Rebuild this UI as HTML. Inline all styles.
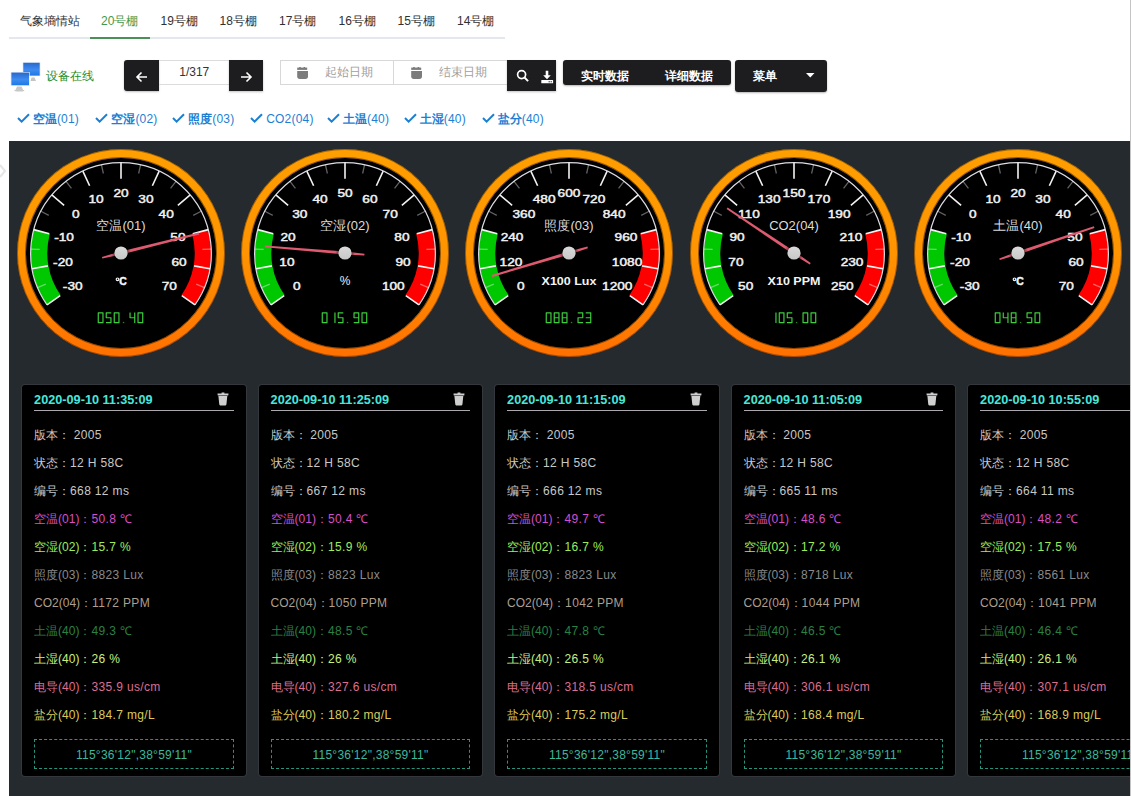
<!DOCTYPE html><html><head><meta charset="utf-8"><title>gauges</title><style>
*{margin:0;padding:0;box-sizing:border-box}
html,body{width:1131px;height:796px;overflow:hidden;background:#fff;font-family:"Liberation Sans",sans-serif}
.abs{position:absolute}
.tab{position:absolute;top:13px;font-size:12px;color:#303133;line-height:16px;white-space:nowrap}
.tab.on{color:#3f9a4f}
.tabline{position:absolute;left:9px;top:37px;width:496px;height:2px;background:#e4e7ed}
.tabact{position:absolute;left:90px;top:37px;width:60px;height:2px;background:#4a9158}
.btn{position:absolute;background:#1d1d1f;color:#fff}
.chk{position:absolute;top:111px;font-size:12px;color:#1c7fd4;line-height:16px;white-space:nowrap;letter-spacing:0.2px}
.chk b{font-weight:bold;letter-spacing:0}
.panel{position:absolute;left:9px;top:141px;width:1121px;height:700px;background:#252a2e;overflow:hidden}
.g{position:absolute;top:0px;top:0}
.lb{font:11.5px "Liberation Sans",sans-serif;fill:#f2f2f2;stroke:#f2f2f2;stroke-width:0.45px;text-anchor:middle}
.tt{font:13px "Liberation Sans",sans-serif;fill:#dcdcdc;text-anchor:middle}
.un{font:bold 11.5px "Liberation Sans",sans-serif;fill:#f4f4f4;text-anchor:middle}
.unr{font:12px "Liberation Sans",sans-serif;fill:#f0f0f0;text-anchor:middle}
.card{position:absolute;top:244px;width:223.8px;height:390.6px;background:#000;border-radius:3px;box-shadow:0 0 0 1px #34383c}
.dt{position:absolute;left:12px;top:6.8px;font:bold 12.7px/16px "Liberation Sans",sans-serif;color:#4ae6da;white-space:nowrap}
.trash{position:absolute;left:194.6px;top:6.6px}
.ul{position:absolute;left:12px;right:12px;top:24.8px;height:1.3px;background:#ada8ad}
.row{position:absolute;left:12px;font-size:12px;line-height:16px;white-space:nowrap}
.v{letter-spacing:0.35px}
.c0{color:#c8c8c8}.c1{color:#d64fca}.c2{color:#9eec5c}.c3{color:#8a8a8a}.c4{color:#ae9f8f}
.c5{color:#2b8044}.c6{color:#c8ef80}.c7{color:#dc6e92}.c8{color:#dccb5c}
.loc{position:absolute;left:12px;right:12px;top:354px;height:30px;border:1px dashed #27947f;color:#3db89c;font-size:12px;line-height:30px;letter-spacing:0.25px;text-align:center;white-space:nowrap}
</style></head><body><div class="tab" style="left:19.5px">气象墒情站</div><div class="tab on" style="left:101px">20号棚</div><div class="tab" style="left:160.5px">19号棚</div><div class="tab" style="left:219.5px">18号棚</div><div class="tab" style="left:279px">17号棚</div><div class="tab" style="left:338.5px">16号棚</div><div class="tab" style="left:397.5px">15号棚</div><div class="tab" style="left:457px">14号棚</div><div class="tabline"></div><div class="tabact"></div><svg class="abs" style="left:9px;top:60px" width="34" height="34" viewBox="0 0 34 34">
<defs><linearGradient id="mon" x1="0" y1="0" x2="0" y2="1"><stop offset="0" stop-color="#2a68cc"/><stop offset="0.55" stop-color="#3d8cf0"/><stop offset="1" stop-color="#1f78e6"/></linearGradient></defs>
<path d="M22.5 17.5l-1 3.5h5.5l-1.5-3.5z" fill="#c4c4c4"/>
<rect x="13.6" y="2.2" width="17.8" height="13.9" fill="#dbe8f6"/>
<rect x="14.3" y="2.8" width="16.4" height="12.8" fill="url(#mon)"/>
<path d="M8 26.5l-1.5 3.5h-1.2q-0.5 1.4 2 1.5h6q2.5-0.1 2-1.5h-1.2l-1.5-3.5z" fill="#c8c8c8"/>
<rect x="1.7" y="12" width="19" height="13.8" fill="#dbe8f6"/>
<rect x="2.4" y="12.6" width="17.6" height="12.6" fill="url(#mon)"/>
</svg><div class="abs" style="left:45.5px;top:67.5px;font-size:12px;line-height:16px;color:#1e8c1e">设备在线</div><div class="btn" style="left:124px;top:60px;width:35px;height:31px;border-radius:3px 0 0 3px;box-shadow:0 1px 2px rgba(0,0,0,.25)"></div><svg class="abs" style="left:134px;top:69px" width="16" height="16" viewBox="0 0 16 16"><path d="M13 8H3M7.5 3.5L3 8l4.5 4.5" stroke="#fff" stroke-width="1.6" fill="none"/></svg><div class="abs" style="left:159px;top:60px;width:70.5px;height:24.5px;border-top:1px solid #dcdcdc;border-bottom:1px solid #dcdcdc;font-size:12px;line-height:22px;color:#333;text-align:center">1/317</div><div class="btn" style="left:229.3px;top:60px;width:33.5px;height:31px;box-shadow:0 1px 2px rgba(0,0,0,.25)"></div><svg class="abs" style="left:238px;top:69px" width="16" height="16" viewBox="0 0 16 16"><path d="M3 8h10M8.5 3.5L13 8l-4.5 4.5" stroke="#fff" stroke-width="1.6" fill="none"/></svg><div class="abs" style="left:280px;top:60px;width:227.5px;height:24.5px;border:1px solid #d8d8d8;border-right:none"></div><div class="abs" style="left:392.5px;top:60px;width:1px;height:24.5px;background:#d8d8d8"></div><svg class="abs" style="left:296.8px;top:66.8px" width="12" height="13" viewBox="0 0 12 13"><rect x="0.2" y="0.6" width="10" height="2.3" fill="#7c7c7c"/><rect x="2.2" y="0" width="1.6" height="1.2" fill="#7c7c7c"/><rect x="6.6" y="0" width="1.6" height="1.2" fill="#7c7c7c"/><path d="M0.2 3.9h10.8v5.4q0 2.6-2.6 2.6h-5.6q-2.6 0-2.6-2.6z" fill="#7c7c7c"/></svg><svg class="abs" style="left:411px;top:66.8px" width="12" height="13" viewBox="0 0 12 13"><rect x="0.2" y="0.6" width="10" height="2.3" fill="#7c7c7c"/><rect x="2.2" y="0" width="1.6" height="1.2" fill="#7c7c7c"/><rect x="6.6" y="0" width="1.6" height="1.2" fill="#7c7c7c"/><path d="M0.2 3.9h10.8v5.4q0 2.6-2.6 2.6h-5.6q-2.6 0-2.6-2.6z" fill="#7c7c7c"/></svg><div class="abs" style="left:324.5px;top:63.8px;font-size:12px;line-height:16px;color:#a0a0a0">起始日期</div><div class="abs" style="left:438.5px;top:63.8px;font-size:12px;line-height:16px;color:#a0a0a0">结束日期</div><div class="btn" style="left:507px;top:60px;width:49px;height:31px;box-shadow:0 1px 2px rgba(0,0,0,.25)"></div><svg class="abs" style="left:516px;top:69px" width="14" height="14" viewBox="0 0 14 14"><circle cx="5.6" cy="5.6" r="4" stroke="#fff" stroke-width="1.7" fill="none"/><path d="M8.5 8.5l3.6 3.6" stroke="#fff" stroke-width="1.9"/></svg><svg class="abs" style="left:540px;top:69.5px" width="14" height="14" viewBox="0 0 14 14"><path d="M5.7 0.8h2.6v4.4h2.5L7 9.2 3.2 5.2h2.5z" fill="#fff"/><rect x="1.3" y="9.9" width="11.8" height="3.4" rx="0.4" fill="#fff"/><rect x="8.6" y="11.2" width="1.2" height="1.1" fill="#1d1d1f"/><rect x="10.6" y="11.2" width="1.2" height="1.1" fill="#1d1d1f"/></svg><div class="btn" style="left:563.2px;top:60px;width:168.2px;height:24.5px;border-radius:3px;box-shadow:0 1px 2px rgba(0,0,0,.3)"></div><div class="abs" style="left:581px;top:67.5px;font:bold 12px/16px 'Liberation Sans',sans-serif;color:#fff">实时数据</div><div class="abs" style="left:665px;top:67.5px;font:bold 12px/16px 'Liberation Sans',sans-serif;color:#fff">详细数据</div><div class="btn" style="left:735.4px;top:60px;width:91.2px;height:32.4px;border-radius:3px;box-shadow:0 1px 2px rgba(0,0,0,.3)"></div><div class="abs" style="left:753px;top:67.5px;font:bold 12px/16px 'Liberation Sans',sans-serif;color:#fff">菜单</div><svg class="abs" style="left:806px;top:73px" width="9" height="5" viewBox="0 0 9 5"><path d="M0 0h8.5L4.25 4.5z" fill="#fff"/></svg><svg class="abs" style="left:16.9px;top:113px" width="13" height="10" viewBox="0 0 13 10"><path d="M1 5l3.6 3.6L12 1.2" stroke="#1c7fd4" stroke-width="2" fill="none"/></svg><div class="chk" style="left:32.9px"><b>空温</b>(01)</div><svg class="abs" style="left:95.4px;top:113px" width="13" height="10" viewBox="0 0 13 10"><path d="M1 5l3.6 3.6L12 1.2" stroke="#1c7fd4" stroke-width="2" fill="none"/></svg><div class="chk" style="left:111.4px"><b>空湿</b>(02)</div><svg class="abs" style="left:172.2px;top:113px" width="13" height="10" viewBox="0 0 13 10"><path d="M1 5l3.6 3.6L12 1.2" stroke="#1c7fd4" stroke-width="2" fill="none"/></svg><div class="chk" style="left:188.2px"><b>照度</b>(03)</div><svg class="abs" style="left:250.2px;top:113px" width="13" height="10" viewBox="0 0 13 10"><path d="M1 5l3.6 3.6L12 1.2" stroke="#1c7fd4" stroke-width="2" fill="none"/></svg><div class="chk" style="left:266.2px"><b></b>CO2(04)</div><svg class="abs" style="left:327px;top:113px" width="13" height="10" viewBox="0 0 13 10"><path d="M1 5l3.6 3.6L12 1.2" stroke="#1c7fd4" stroke-width="2" fill="none"/></svg><div class="chk" style="left:343px"><b>土温</b>(40)</div><svg class="abs" style="left:403.8px;top:113px" width="13" height="10" viewBox="0 0 13 10"><path d="M1 5l3.6 3.6L12 1.2" stroke="#1c7fd4" stroke-width="2" fill="none"/></svg><div class="chk" style="left:419.8px"><b>土湿</b>(40)</div><svg class="abs" style="left:481.8px;top:113px" width="13" height="10" viewBox="0 0 13 10"><path d="M1 5l3.6 3.6L12 1.2" stroke="#1c7fd4" stroke-width="2" fill="none"/></svg><div class="chk" style="left:497.8px"><b>盐分</b>(40)</div><div class="abs" style="left:1130px;top:0;width:1px;height:796px;background:#c4c4c4"></div><svg class="abs" style="left:0;top:163px" width="8" height="16" viewBox="0 0 8 16"><path d="M0 2l5 6-5 6" stroke="#e6e6e6" stroke-width="2.2" fill="none"/></svg><div class="panel"><svg width="0" height="0" style="position:absolute"><defs>
<linearGradient id="og" x1="0" y1="0" x2="0" y2="1"><stop offset="0" stop-color="#ff9f00"/><stop offset="0.5" stop-color="#ff9400"/><stop offset="1" stop-color="#ff7000"/></linearGradient>
<linearGradient id="kg" x1="0" y1="0" x2="0" y2="1"><stop offset="0" stop-color="#dadada"/><stop offset="1" stop-color="#c8c8c8"/></linearGradient>
<radialGradient id="ks"><stop offset="0.6" stop-color="#000" stop-opacity="0.5"/><stop offset="1" stop-color="#000" stop-opacity="0"/></radialGradient>
</defs></svg><svg class="g" style="left:0px" width="224" height="224" viewBox="0 0 224.2 224"><g transform="translate(112.1 112)"><circle r="104" fill="url(#og)"/><circle r="103.6" fill="none" stroke="rgba(40,20,0,0.45)" stroke-width="0.9"/><circle r="95.6" fill="none" stroke="rgba(40,20,0,0.55)" stroke-width="0.9"/><circle r="95.1" fill="#000"/><path d="M-74.05 51.85A90.4 90.4 0 0 1 -87.32 -23.4L-71.29 -19.1A73.8 73.8 0 0 0 -60.45 42.33Z" fill="#00c800"/><path d="M87.32 -23.4A90.4 90.4 0 0 1 74.05 51.85L60.45 42.33A73.8 73.8 0 0 0 71.29 -19.1Z" fill="#ff0000"/><path d="M-74.05 51.85A90.4 90.4 0 1 1 74.05 51.85" stroke="#dcdce4" stroke-width="1.2" fill="none"/><path d="M-74.05 51.85L-60.86 42.62M-89.03 15.7L-73.17 12.9M-87.32 -23.4L-71.77 -19.23M-69.25 -58.11L-56.92 -47.76M-38.2 -81.93L-31.4 -67.34M0 -90.4L0 -74.3M38.2 -81.93L31.4 -67.34M69.25 -58.11L56.92 -47.76M87.32 -23.4L71.77 -19.23M89.03 15.7L73.17 12.9M74.05 51.85L60.86 42.62" stroke="#f2f2f2" stroke-width="1.6"/><path d="M-83.52 34.59L-75.3 31.19M-90.31 -3.94L-81.42 -3.55M-80.19 -41.74L-72.29 -37.63M-55.03 -71.72L-49.61 -64.66M-19.57 -88.26L-17.64 -79.57M19.57 -88.26L17.64 -79.57M55.03 -71.72L49.61 -64.66M80.19 -41.74L72.29 -37.63M90.31 -3.94L81.42 -3.55M83.52 34.59L75.3 31.19" stroke="rgba(255,255,255,0.38)" stroke-width="1.3"/><text transform="translate(-48.33 36.94) scale(1.19 1)" class="lb">-30</text><text transform="translate(-58.1 13.35) scale(1.19 1)" class="lb">-20</text><text transform="translate(-56.99 -12.17) scale(1.19 1)" class="lb">-10</text><text transform="translate(-45.2 -34.82) scale(1.19 1)" class="lb">0</text><text transform="translate(-24.93 -50.37) scale(1.19 1)" class="lb">10</text><text transform="translate(0 -55.9) scale(1.19 1)" class="lb">20</text><text transform="translate(24.93 -50.37) scale(1.19 1)" class="lb">30</text><text transform="translate(45.2 -34.82) scale(1.19 1)" class="lb">40</text><text transform="translate(56.99 -12.17) scale(1.19 1)" class="lb">50</text><text transform="translate(58.1 13.35) scale(1.19 1)" class="lb">60</text><text transform="translate(48.33 36.94) scale(1.19 1)" class="lb">70</text><text x="0" y="-23.5" class="tt">空温(01)</text><circle cx="-3.5" cy="26.3" r="1.3" stroke="#f4f4f4" stroke-width="1.2" fill="none"/><text x="1.9" y="32.4" class="un" style="font-size:10.4px;stroke:#f4f4f4;stroke-width:0.5px">C</text><path d="M-22.45 59.85L-18.35 59.85M-18.05 60.15L-18.05 64.5M-18.05 65.1L-18.05 69.45M-22.45 69.75L-18.35 69.75M-22.75 65.1L-22.75 69.45M-22.75 60.15L-22.75 64.5" stroke="#3ccc3c" stroke-width="1.2" stroke-linecap="square" fill="none"/><path d="M-14.45 59.85L-10.35 59.85M-10.05 65.1L-10.05 69.45M-14.45 69.75L-10.35 69.75M-14.75 60.15L-14.75 64.5M-14.45 64.8L-10.35 64.8" stroke="#3ccc3c" stroke-width="1.2" stroke-linecap="square" fill="none"/><path d="M-6.45 59.85L-2.35 59.85M-2.05 60.15L-2.05 64.5M-2.05 65.1L-2.05 69.45M-6.45 69.75L-2.35 69.75M-6.75 65.1L-6.75 69.45M-6.75 60.15L-6.75 64.5" stroke="#3ccc3c" stroke-width="1.2" stroke-linecap="square" fill="none"/><rect x="1.85" y="68.95" width="1.4" height="1.3" fill="#3ccc3c" opacity="0.65"/><path d="M13.75 60.15L13.75 64.5M13.75 65.1L13.75 69.45M9.05 60.15L9.05 64.5M9.35 64.8L13.45 64.8" stroke="#3ccc3c" stroke-width="1.2" stroke-linecap="square" fill="none"/><path d="M17.35 59.85L21.45 59.85M21.75 60.15L21.75 64.5M21.75 65.1L21.75 69.45M17.35 69.75L21.45 69.75M17.05 65.1L17.05 69.45M17.05 60.15L17.05 64.5" stroke="#3ccc3c" stroke-width="1.2" stroke-linecap="square" fill="none"/><path d="M-18.72 5.54L0.37 1.5L78.34 -18.55L77.88 -20.4L-0.37 -1.5L-19.13 3.89Z" fill="#de5a70"/><circle r="10" fill="url(#ks)"/><circle r="6.6" fill="url(#kg)"/></g></svg><svg class="g" style="left:224.2px" width="224" height="224" viewBox="0 0 224.2 224"><g transform="translate(112.1 112)"><circle r="104" fill="url(#og)"/><circle r="103.6" fill="none" stroke="rgba(40,20,0,0.45)" stroke-width="0.9"/><circle r="95.6" fill="none" stroke="rgba(40,20,0,0.55)" stroke-width="0.9"/><circle r="95.1" fill="#000"/><path d="M-74.05 51.85A90.4 90.4 0 0 1 -87.32 -23.4L-71.29 -19.1A73.8 73.8 0 0 0 -60.45 42.33Z" fill="#00c800"/><path d="M87.32 -23.4A90.4 90.4 0 0 1 74.05 51.85L60.45 42.33A73.8 73.8 0 0 0 71.29 -19.1Z" fill="#ff0000"/><path d="M-74.05 51.85A90.4 90.4 0 1 1 74.05 51.85" stroke="#dcdce4" stroke-width="1.2" fill="none"/><path d="M-74.05 51.85L-60.86 42.62M-89.03 15.7L-73.17 12.9M-87.32 -23.4L-71.77 -19.23M-69.25 -58.11L-56.92 -47.76M-38.2 -81.93L-31.4 -67.34M0 -90.4L0 -74.3M38.2 -81.93L31.4 -67.34M69.25 -58.11L56.92 -47.76M87.32 -23.4L71.77 -19.23M89.03 15.7L73.17 12.9M74.05 51.85L60.86 42.62" stroke="#f2f2f2" stroke-width="1.6"/><path d="M-83.52 34.59L-75.3 31.19M-90.31 -3.94L-81.42 -3.55M-80.19 -41.74L-72.29 -37.63M-55.03 -71.72L-49.61 -64.66M-19.57 -88.26L-17.64 -79.57M19.57 -88.26L17.64 -79.57M55.03 -71.72L49.61 -64.66M80.19 -41.74L72.29 -37.63M90.31 -3.94L81.42 -3.55M83.52 34.59L75.3 31.19" stroke="rgba(255,255,255,0.38)" stroke-width="1.3"/><text transform="translate(-48.33 36.94) scale(1.19 1)" class="lb">0</text><text transform="translate(-58.1 13.35) scale(1.19 1)" class="lb">10</text><text transform="translate(-56.99 -12.17) scale(1.19 1)" class="lb">20</text><text transform="translate(-45.2 -34.82) scale(1.19 1)" class="lb">30</text><text transform="translate(-24.93 -50.37) scale(1.19 1)" class="lb">40</text><text transform="translate(0 -55.9) scale(1.19 1)" class="lb">50</text><text transform="translate(24.93 -50.37) scale(1.19 1)" class="lb">60</text><text transform="translate(45.2 -34.82) scale(1.19 1)" class="lb">70</text><text transform="translate(56.99 -12.17) scale(1.19 1)" class="lb">80</text><text transform="translate(58.1 13.35) scale(1.19 1)" class="lb">90</text><text transform="translate(48.33 36.94) scale(1.19 1)" class="lb">100</text><text x="0" y="-23.5" class="tt">空湿(02)</text><text x="0" y="32.4" class="unr">%</text><path d="M-22.45 59.85L-18.35 59.85M-18.05 60.15L-18.05 64.5M-18.05 65.1L-18.05 69.45M-22.45 69.75L-18.35 69.75M-22.75 65.1L-22.75 69.45M-22.75 60.15L-22.75 64.5" stroke="#3ccc3c" stroke-width="1.2" stroke-linecap="square" fill="none"/><path d="M-10.05 60.15L-10.05 64.5M-10.05 65.1L-10.05 69.45" stroke="#3ccc3c" stroke-width="1.2" stroke-linecap="square" fill="none"/><path d="M-6.45 59.85L-2.35 59.85M-2.05 65.1L-2.05 69.45M-6.45 69.75L-2.35 69.75M-6.75 60.15L-6.75 64.5M-6.45 64.8L-2.35 64.8" stroke="#3ccc3c" stroke-width="1.2" stroke-linecap="square" fill="none"/><rect x="1.85" y="68.95" width="1.4" height="1.3" fill="#3ccc3c" opacity="0.65"/><path d="M9.35 59.85L13.45 59.85M13.75 60.15L13.75 64.5M13.75 65.1L13.75 69.45M9.35 69.75L13.45 69.75M9.05 60.15L9.05 64.5M9.35 64.8L13.45 64.8" stroke="#3ccc3c" stroke-width="1.2" stroke-linecap="square" fill="none"/><path d="M17.35 59.85L21.45 59.85M21.75 60.15L21.75 64.5M21.75 65.1L21.75 69.45M17.35 69.75L21.45 69.75M17.05 65.1L17.05 69.45M17.05 60.15L17.05 64.5" stroke="#3ccc3c" stroke-width="1.2" stroke-linecap="square" fill="none"/><path d="M19.5 0.77L0.13 -1.54L-80.14 -7.61L-80.3 -5.72L-0.13 1.54L19.36 2.46Z" fill="#de5a70"/><circle r="10" fill="url(#ks)"/><circle r="6.6" fill="url(#kg)"/></g></svg><svg class="g" style="left:448.4px" width="224" height="224" viewBox="0 0 224.2 224"><g transform="translate(112.1 112)"><circle r="104" fill="url(#og)"/><circle r="103.6" fill="none" stroke="rgba(40,20,0,0.45)" stroke-width="0.9"/><circle r="95.6" fill="none" stroke="rgba(40,20,0,0.55)" stroke-width="0.9"/><circle r="95.1" fill="#000"/><path d="M-74.05 51.85A90.4 90.4 0 0 1 -87.32 -23.4L-71.29 -19.1A73.8 73.8 0 0 0 -60.45 42.33Z" fill="#00c800"/><path d="M87.32 -23.4A90.4 90.4 0 0 1 74.05 51.85L60.45 42.33A73.8 73.8 0 0 0 71.29 -19.1Z" fill="#ff0000"/><path d="M-74.05 51.85A90.4 90.4 0 1 1 74.05 51.85" stroke="#dcdce4" stroke-width="1.2" fill="none"/><path d="M-74.05 51.85L-60.86 42.62M-89.03 15.7L-73.17 12.9M-87.32 -23.4L-71.77 -19.23M-69.25 -58.11L-56.92 -47.76M-38.2 -81.93L-31.4 -67.34M0 -90.4L0 -74.3M38.2 -81.93L31.4 -67.34M69.25 -58.11L56.92 -47.76M87.32 -23.4L71.77 -19.23M89.03 15.7L73.17 12.9M74.05 51.85L60.86 42.62" stroke="#f2f2f2" stroke-width="1.6"/><path d="M-83.52 34.59L-75.3 31.19M-90.31 -3.94L-81.42 -3.55M-80.19 -41.74L-72.29 -37.63M-55.03 -71.72L-49.61 -64.66M-19.57 -88.26L-17.64 -79.57M19.57 -88.26L17.64 -79.57M55.03 -71.72L49.61 -64.66M80.19 -41.74L72.29 -37.63M90.31 -3.94L81.42 -3.55M83.52 34.59L75.3 31.19" stroke="rgba(255,255,255,0.38)" stroke-width="1.3"/><text transform="translate(-48.33 36.94) scale(1.19 1)" class="lb">0</text><text transform="translate(-58.1 13.35) scale(1.19 1)" class="lb">120</text><text transform="translate(-56.99 -12.17) scale(1.19 1)" class="lb">240</text><text transform="translate(-45.2 -34.82) scale(1.19 1)" class="lb">360</text><text transform="translate(-24.93 -50.37) scale(1.19 1)" class="lb">480</text><text transform="translate(0 -55.9) scale(1.19 1)" class="lb">600</text><text transform="translate(24.93 -50.37) scale(1.19 1)" class="lb">720</text><text transform="translate(45.2 -34.82) scale(1.19 1)" class="lb">840</text><text transform="translate(56.99 -12.17) scale(1.19 1)" class="lb">960</text><text transform="translate(58.1 13.35) scale(1.19 1)" class="lb">1080</text><text transform="translate(48.33 36.94) scale(1.19 1)" class="lb">1200</text><text x="0" y="-23.5" class="tt">照度(03)</text><text transform="translate(0 32.4) scale(1.09 1)" class="un">X100 Lux</text><path d="M-22.45 59.85L-18.35 59.85M-18.05 60.15L-18.05 64.5M-18.05 65.1L-18.05 69.45M-22.45 69.75L-18.35 69.75M-22.75 65.1L-22.75 69.45M-22.75 60.15L-22.75 64.5" stroke="#3ccc3c" stroke-width="1.2" stroke-linecap="square" fill="none"/><path d="M-14.45 59.85L-10.35 59.85M-10.05 60.15L-10.05 64.5M-10.05 65.1L-10.05 69.45M-14.45 69.75L-10.35 69.75M-14.75 65.1L-14.75 69.45M-14.75 60.15L-14.75 64.5M-14.45 64.8L-10.35 64.8" stroke="#3ccc3c" stroke-width="1.2" stroke-linecap="square" fill="none"/><path d="M-6.45 59.85L-2.35 59.85M-2.05 60.15L-2.05 64.5M-2.05 65.1L-2.05 69.45M-6.45 69.75L-2.35 69.75M-6.75 65.1L-6.75 69.45M-6.75 60.15L-6.75 64.5M-6.45 64.8L-2.35 64.8" stroke="#3ccc3c" stroke-width="1.2" stroke-linecap="square" fill="none"/><rect x="1.85" y="68.95" width="1.4" height="1.3" fill="#3ccc3c" opacity="0.65"/><path d="M9.35 59.85L13.45 59.85M13.75 60.15L13.75 64.5M9.35 69.75L13.45 69.75M9.05 65.1L9.05 69.45M9.35 64.8L13.45 64.8" stroke="#3ccc3c" stroke-width="1.2" stroke-linecap="square" fill="none"/><path d="M17.35 59.85L21.45 59.85M21.75 60.15L21.75 64.5M21.75 65.1L21.75 69.45M17.35 69.75L21.45 69.75M17.35 64.8L21.45 64.8" stroke="#3ccc3c" stroke-width="1.2" stroke-linecap="square" fill="none"/><path d="M18.44 -6.39L-0.44 -1.49L-77.41 22.11L-76.87 23.93L0.44 1.49L18.93 -4.76Z" fill="#de5a70"/><circle r="10" fill="url(#ks)"/><circle r="6.6" fill="url(#kg)"/></g></svg><svg class="g" style="left:672.6px" width="224" height="224" viewBox="0 0 224.2 224"><g transform="translate(112.1 112)"><circle r="104" fill="url(#og)"/><circle r="103.6" fill="none" stroke="rgba(40,20,0,0.45)" stroke-width="0.9"/><circle r="95.6" fill="none" stroke="rgba(40,20,0,0.55)" stroke-width="0.9"/><circle r="95.1" fill="#000"/><path d="M-74.05 51.85A90.4 90.4 0 0 1 -87.32 -23.4L-71.29 -19.1A73.8 73.8 0 0 0 -60.45 42.33Z" fill="#00c800"/><path d="M87.32 -23.4A90.4 90.4 0 0 1 74.05 51.85L60.45 42.33A73.8 73.8 0 0 0 71.29 -19.1Z" fill="#ff0000"/><path d="M-74.05 51.85A90.4 90.4 0 1 1 74.05 51.85" stroke="#dcdce4" stroke-width="1.2" fill="none"/><path d="M-74.05 51.85L-60.86 42.62M-89.03 15.7L-73.17 12.9M-87.32 -23.4L-71.77 -19.23M-69.25 -58.11L-56.92 -47.76M-38.2 -81.93L-31.4 -67.34M0 -90.4L0 -74.3M38.2 -81.93L31.4 -67.34M69.25 -58.11L56.92 -47.76M87.32 -23.4L71.77 -19.23M89.03 15.7L73.17 12.9M74.05 51.85L60.86 42.62" stroke="#f2f2f2" stroke-width="1.6"/><path d="M-83.52 34.59L-75.3 31.19M-90.31 -3.94L-81.42 -3.55M-80.19 -41.74L-72.29 -37.63M-55.03 -71.72L-49.61 -64.66M-19.57 -88.26L-17.64 -79.57M19.57 -88.26L17.64 -79.57M55.03 -71.72L49.61 -64.66M80.19 -41.74L72.29 -37.63M90.31 -3.94L81.42 -3.55M83.52 34.59L75.3 31.19" stroke="rgba(255,255,255,0.38)" stroke-width="1.3"/><text transform="translate(-48.33 36.94) scale(1.19 1)" class="lb">50</text><text transform="translate(-58.1 13.35) scale(1.19 1)" class="lb">70</text><text transform="translate(-56.99 -12.17) scale(1.19 1)" class="lb">90</text><text transform="translate(-45.2 -34.82) scale(1.19 1)" class="lb">110</text><text transform="translate(-24.93 -50.37) scale(1.19 1)" class="lb">130</text><text transform="translate(0 -55.9) scale(1.19 1)" class="lb">150</text><text transform="translate(24.93 -50.37) scale(1.19 1)" class="lb">170</text><text transform="translate(45.2 -34.82) scale(1.19 1)" class="lb">190</text><text transform="translate(56.99 -12.17) scale(1.19 1)" class="lb">210</text><text transform="translate(58.1 13.35) scale(1.19 1)" class="lb">230</text><text transform="translate(48.33 36.94) scale(1.19 1)" class="lb">250</text><text x="0" y="-23.5" class="tt">CO2(04)</text><text transform="translate(0 32.4) scale(1.09 1)" class="un">X10 PPM</text><path d="M-18.05 60.15L-18.05 64.5M-18.05 65.1L-18.05 69.45" stroke="#3ccc3c" stroke-width="1.2" stroke-linecap="square" fill="none"/><path d="M-14.45 59.85L-10.35 59.85M-10.05 60.15L-10.05 64.5M-10.05 65.1L-10.05 69.45M-14.45 69.75L-10.35 69.75M-14.75 65.1L-14.75 69.45M-14.75 60.15L-14.75 64.5" stroke="#3ccc3c" stroke-width="1.2" stroke-linecap="square" fill="none"/><path d="M-6.45 59.85L-2.35 59.85M-2.05 65.1L-2.05 69.45M-6.45 69.75L-2.35 69.75M-6.75 60.15L-6.75 64.5M-6.45 64.8L-2.35 64.8" stroke="#3ccc3c" stroke-width="1.2" stroke-linecap="square" fill="none"/><rect x="1.85" y="68.95" width="1.4" height="1.3" fill="#3ccc3c" opacity="0.65"/><path d="M9.35 59.85L13.45 59.85M13.75 60.15L13.75 64.5M13.75 65.1L13.75 69.45M9.35 69.75L13.45 69.75M9.05 65.1L9.05 69.45M9.05 60.15L9.05 64.5" stroke="#3ccc3c" stroke-width="1.2" stroke-linecap="square" fill="none"/><path d="M17.35 59.85L21.45 59.85M21.75 60.15L21.75 64.5M21.75 65.1L21.75 69.45M17.35 69.75L21.45 69.75M17.05 65.1L17.05 69.45M17.05 60.15L17.05 64.5" stroke="#3ccc3c" stroke-width="1.2" stroke-linecap="square" fill="none"/><path d="M16.69 10.13L0.86 -1.29L-66.41 -45.51L-67.46 -43.93L-0.86 1.29L15.74 11.54Z" fill="#de5a70"/><circle r="10" fill="url(#ks)"/><circle r="6.6" fill="url(#kg)"/></g></svg><svg class="g" style="left:896.8px" width="224" height="224" viewBox="0 0 224.2 224"><g transform="translate(112.1 112)"><circle r="104" fill="url(#og)"/><circle r="103.6" fill="none" stroke="rgba(40,20,0,0.45)" stroke-width="0.9"/><circle r="95.6" fill="none" stroke="rgba(40,20,0,0.55)" stroke-width="0.9"/><circle r="95.1" fill="#000"/><path d="M-74.05 51.85A90.4 90.4 0 0 1 -87.32 -23.4L-71.29 -19.1A73.8 73.8 0 0 0 -60.45 42.33Z" fill="#00c800"/><path d="M87.32 -23.4A90.4 90.4 0 0 1 74.05 51.85L60.45 42.33A73.8 73.8 0 0 0 71.29 -19.1Z" fill="#ff0000"/><path d="M-74.05 51.85A90.4 90.4 0 1 1 74.05 51.85" stroke="#dcdce4" stroke-width="1.2" fill="none"/><path d="M-74.05 51.85L-60.86 42.62M-89.03 15.7L-73.17 12.9M-87.32 -23.4L-71.77 -19.23M-69.25 -58.11L-56.92 -47.76M-38.2 -81.93L-31.4 -67.34M0 -90.4L0 -74.3M38.2 -81.93L31.4 -67.34M69.25 -58.11L56.92 -47.76M87.32 -23.4L71.77 -19.23M89.03 15.7L73.17 12.9M74.05 51.85L60.86 42.62" stroke="#f2f2f2" stroke-width="1.6"/><path d="M-83.52 34.59L-75.3 31.19M-90.31 -3.94L-81.42 -3.55M-80.19 -41.74L-72.29 -37.63M-55.03 -71.72L-49.61 -64.66M-19.57 -88.26L-17.64 -79.57M19.57 -88.26L17.64 -79.57M55.03 -71.72L49.61 -64.66M80.19 -41.74L72.29 -37.63M90.31 -3.94L81.42 -3.55M83.52 34.59L75.3 31.19" stroke="rgba(255,255,255,0.38)" stroke-width="1.3"/><text transform="translate(-48.33 36.94) scale(1.19 1)" class="lb">-30</text><text transform="translate(-58.1 13.35) scale(1.19 1)" class="lb">-20</text><text transform="translate(-56.99 -12.17) scale(1.19 1)" class="lb">-10</text><text transform="translate(-45.2 -34.82) scale(1.19 1)" class="lb">0</text><text transform="translate(-24.93 -50.37) scale(1.19 1)" class="lb">10</text><text transform="translate(0 -55.9) scale(1.19 1)" class="lb">20</text><text transform="translate(24.93 -50.37) scale(1.19 1)" class="lb">30</text><text transform="translate(45.2 -34.82) scale(1.19 1)" class="lb">40</text><text transform="translate(56.99 -12.17) scale(1.19 1)" class="lb">50</text><text transform="translate(58.1 13.35) scale(1.19 1)" class="lb">60</text><text transform="translate(48.33 36.94) scale(1.19 1)" class="lb">70</text><text x="0" y="-23.5" class="tt">土温(40)</text><circle cx="-3.5" cy="26.3" r="1.3" stroke="#f4f4f4" stroke-width="1.2" fill="none"/><text x="1.9" y="32.4" class="un" style="font-size:10.4px;stroke:#f4f4f4;stroke-width:0.5px">C</text><path d="M-22.45 59.85L-18.35 59.85M-18.05 60.15L-18.05 64.5M-18.05 65.1L-18.05 69.45M-22.45 69.75L-18.35 69.75M-22.75 65.1L-22.75 69.45M-22.75 60.15L-22.75 64.5" stroke="#3ccc3c" stroke-width="1.2" stroke-linecap="square" fill="none"/><path d="M-10.05 60.15L-10.05 64.5M-10.05 65.1L-10.05 69.45M-14.75 60.15L-14.75 64.5M-14.45 64.8L-10.35 64.8" stroke="#3ccc3c" stroke-width="1.2" stroke-linecap="square" fill="none"/><path d="M-6.45 59.85L-2.35 59.85M-2.05 60.15L-2.05 64.5M-2.05 65.1L-2.05 69.45M-6.45 69.75L-2.35 69.75M-6.75 65.1L-6.75 69.45M-6.75 60.15L-6.75 64.5M-6.45 64.8L-2.35 64.8" stroke="#3ccc3c" stroke-width="1.2" stroke-linecap="square" fill="none"/><rect x="1.85" y="68.95" width="1.4" height="1.3" fill="#3ccc3c" opacity="0.65"/><path d="M9.35 59.85L13.45 59.85M13.75 65.1L13.75 69.45M9.35 69.75L13.45 69.75M9.05 60.15L9.05 64.5M9.35 64.8L13.45 64.8" stroke="#3ccc3c" stroke-width="1.2" stroke-linecap="square" fill="none"/><path d="M17.35 59.85L21.45 59.85M21.75 60.15L21.75 64.5M21.75 65.1L21.75 69.45M17.35 69.75L21.45 69.75M17.05 65.1L17.05 69.45M17.05 60.15L17.05 64.5" stroke="#3ccc3c" stroke-width="1.2" stroke-linecap="square" fill="none"/><path d="M-18.19 7.07L0.5 1.47L76.53 -24.98L75.92 -26.78L-0.5 -1.47L-18.74 5.46Z" fill="#de5a70"/><circle r="10" fill="url(#ks)"/><circle r="6.6" fill="url(#kg)"/></g></svg><div class="card" style="left:13.1px"><div class="dt">2020-09-10 11:35:09</div><svg class="trash" width="12" height="14" viewBox="0 0 12 14"><path d="M4.6 0.5h2.8v1h3.9q0.4 0 0.2 0.6l-0.3 1.3h-10.4l-0.3-1.3q-0.2-0.6 0.2-0.6h3.9z" fill="#cfcfcf"/><path d="M1.4 3.9h8.9l-0.9 8.7q-0.1 0.8-0.9 0.8h-5.3q-0.8 0-0.9-0.8z" fill="#cfcfcf"/></svg><div class="ul"></div><div class="row c0" style="top:41.6px">版本：<span class="v"> 2005</span></div><div class="row c0" style="top:69.6px">状态：<span class="v">12 H 58C</span></div><div class="row c0" style="top:97.6px">编号：<span class="v">668 12 ms</span></div><div class="row c1" style="top:125.6px">空温(01)：<span class="v">50.8 ℃</span></div><div class="row c2" style="top:153.6px">空湿(02)：<span class="v">15.7 %</span></div><div class="row c3" style="top:181.6px">照度(03)：<span class="v">8823 Lux</span></div><div class="row c4" style="top:209.6px">CO2(04)：<span class="v">1172 PPM</span></div><div class="row c5" style="top:237.6px">土温(40)：<span class="v">49.3 ℃</span></div><div class="row c6" style="top:265.6px">土湿(40)：<span class="v">26 %</span></div><div class="row c7" style="top:293.6px">电导(40)：<span class="v">335.9 us/cm</span></div><div class="row c8" style="top:321.6px">盐分(40)：<span class="v">184.7 mg/L</span></div><div class="loc">115°36'12",38°59'11"</div></div><div class="card" style="left:249.6px"><div class="dt">2020-09-10 11:25:09</div><svg class="trash" width="12" height="14" viewBox="0 0 12 14"><path d="M4.6 0.5h2.8v1h3.9q0.4 0 0.2 0.6l-0.3 1.3h-10.4l-0.3-1.3q-0.2-0.6 0.2-0.6h3.9z" fill="#cfcfcf"/><path d="M1.4 3.9h8.9l-0.9 8.7q-0.1 0.8-0.9 0.8h-5.3q-0.8 0-0.9-0.8z" fill="#cfcfcf"/></svg><div class="ul"></div><div class="row c0" style="top:41.6px">版本：<span class="v"> 2005</span></div><div class="row c0" style="top:69.6px">状态：<span class="v">12 H 58C</span></div><div class="row c0" style="top:97.6px">编号：<span class="v">667 12 ms</span></div><div class="row c1" style="top:125.6px">空温(01)：<span class="v">50.4 ℃</span></div><div class="row c2" style="top:153.6px">空湿(02)：<span class="v">15.9 %</span></div><div class="row c3" style="top:181.6px">照度(03)：<span class="v">8823 Lux</span></div><div class="row c4" style="top:209.6px">CO2(04)：<span class="v">1050 PPM</span></div><div class="row c5" style="top:237.6px">土温(40)：<span class="v">48.5 ℃</span></div><div class="row c6" style="top:265.6px">土湿(40)：<span class="v">26 %</span></div><div class="row c7" style="top:293.6px">电导(40)：<span class="v">327.6 us/cm</span></div><div class="row c8" style="top:321.6px">盐分(40)：<span class="v">180.2 mg/L</span></div><div class="loc">115°36'12",38°59'11"</div></div><div class="card" style="left:486.1px"><div class="dt">2020-09-10 11:15:09</div><svg class="trash" width="12" height="14" viewBox="0 0 12 14"><path d="M4.6 0.5h2.8v1h3.9q0.4 0 0.2 0.6l-0.3 1.3h-10.4l-0.3-1.3q-0.2-0.6 0.2-0.6h3.9z" fill="#cfcfcf"/><path d="M1.4 3.9h8.9l-0.9 8.7q-0.1 0.8-0.9 0.8h-5.3q-0.8 0-0.9-0.8z" fill="#cfcfcf"/></svg><div class="ul"></div><div class="row c0" style="top:41.6px">版本：<span class="v"> 2005</span></div><div class="row c0" style="top:69.6px">状态：<span class="v">12 H 58C</span></div><div class="row c0" style="top:97.6px">编号：<span class="v">666 12 ms</span></div><div class="row c1" style="top:125.6px">空温(01)：<span class="v">49.7 ℃</span></div><div class="row c2" style="top:153.6px">空湿(02)：<span class="v">16.7 %</span></div><div class="row c3" style="top:181.6px">照度(03)：<span class="v">8823 Lux</span></div><div class="row c4" style="top:209.6px">CO2(04)：<span class="v">1042 PPM</span></div><div class="row c5" style="top:237.6px">土温(40)：<span class="v">47.8 ℃</span></div><div class="row c6" style="top:265.6px">土湿(40)：<span class="v">26.5 %</span></div><div class="row c7" style="top:293.6px">电导(40)：<span class="v">318.5 us/cm</span></div><div class="row c8" style="top:321.6px">盐分(40)：<span class="v">175.2 mg/L</span></div><div class="loc">115°36'12",38°59'11"</div></div><div class="card" style="left:722.6px"><div class="dt">2020-09-10 11:05:09</div><svg class="trash" width="12" height="14" viewBox="0 0 12 14"><path d="M4.6 0.5h2.8v1h3.9q0.4 0 0.2 0.6l-0.3 1.3h-10.4l-0.3-1.3q-0.2-0.6 0.2-0.6h3.9z" fill="#cfcfcf"/><path d="M1.4 3.9h8.9l-0.9 8.7q-0.1 0.8-0.9 0.8h-5.3q-0.8 0-0.9-0.8z" fill="#cfcfcf"/></svg><div class="ul"></div><div class="row c0" style="top:41.6px">版本：<span class="v"> 2005</span></div><div class="row c0" style="top:69.6px">状态：<span class="v">12 H 58C</span></div><div class="row c0" style="top:97.6px">编号：<span class="v">665 11 ms</span></div><div class="row c1" style="top:125.6px">空温(01)：<span class="v">48.6 ℃</span></div><div class="row c2" style="top:153.6px">空湿(02)：<span class="v">17.2 %</span></div><div class="row c3" style="top:181.6px">照度(03)：<span class="v">8718 Lux</span></div><div class="row c4" style="top:209.6px">CO2(04)：<span class="v">1044 PPM</span></div><div class="row c5" style="top:237.6px">土温(40)：<span class="v">46.5 ℃</span></div><div class="row c6" style="top:265.6px">土湿(40)：<span class="v">26.1 %</span></div><div class="row c7" style="top:293.6px">电导(40)：<span class="v">306.1 us/cm</span></div><div class="row c8" style="top:321.6px">盐分(40)：<span class="v">168.4 mg/L</span></div><div class="loc">115°36'12",38°59'11"</div></div><div class="card" style="left:959.1px"><div class="dt">2020-09-10 10:55:09</div><svg class="trash" width="12" height="14" viewBox="0 0 12 14"><path d="M4.6 0.5h2.8v1h3.9q0.4 0 0.2 0.6l-0.3 1.3h-10.4l-0.3-1.3q-0.2-0.6 0.2-0.6h3.9z" fill="#cfcfcf"/><path d="M1.4 3.9h8.9l-0.9 8.7q-0.1 0.8-0.9 0.8h-5.3q-0.8 0-0.9-0.8z" fill="#cfcfcf"/></svg><div class="ul"></div><div class="row c0" style="top:41.6px">版本：<span class="v"> 2005</span></div><div class="row c0" style="top:69.6px">状态：<span class="v">12 H 58C</span></div><div class="row c0" style="top:97.6px">编号：<span class="v">664 11 ms</span></div><div class="row c1" style="top:125.6px">空温(01)：<span class="v">48.2 ℃</span></div><div class="row c2" style="top:153.6px">空湿(02)：<span class="v">17.5 %</span></div><div class="row c3" style="top:181.6px">照度(03)：<span class="v">8561 Lux</span></div><div class="row c4" style="top:209.6px">CO2(04)：<span class="v">1041 PPM</span></div><div class="row c5" style="top:237.6px">土温(40)：<span class="v">46.4 ℃</span></div><div class="row c6" style="top:265.6px">土湿(40)：<span class="v">26.1 %</span></div><div class="row c7" style="top:293.6px">电导(40)：<span class="v">307.1 us/cm</span></div><div class="row c8" style="top:321.6px">盐分(40)：<span class="v">168.9 mg/L</span></div><div class="loc">115°36'12",38°59'11"</div></div></div></body></html>
